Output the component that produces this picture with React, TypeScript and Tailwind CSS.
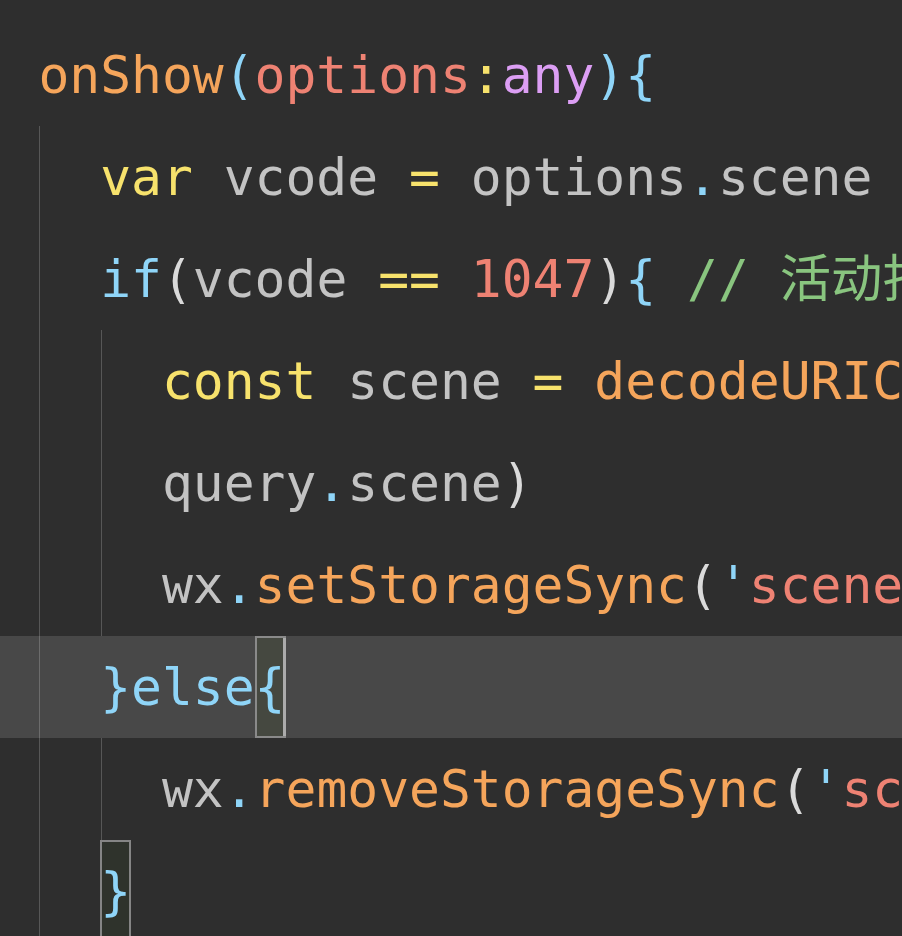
import type { ReactNode } from "react"

// 编辑器配色
const c = {
  fn: "text-[#f5a55b]",
  param: "text-[#ee8273]",
  punc: "text-[#8fd5f8]",
  kw: "text-[#f7e26c]",
  id: "text-[#c3c3c3]",
  paren: "text-[#dadada]",
  type: "text-[#dc9ef4]",
  cm: "text-[#89c57f]",
}

type LineProps = {
  guides?: number[]
  active?: boolean
  children: ReactNode
}

// 一行代码，guides 为缩进线的横坐标
function Line({ guides = [], active, children }: LineProps) {
  return (
    <div
      className={`relative h-[102px] whitespace-pre pl-[38.4px] leading-[102px] ${active ? "bg-[#484848]" : ""}`}
    >
      {guides.map((x) => (
        <span
          key={x}
          className={`absolute top-0 h-full w-px bg-white/20 ${x === 0 ? "left-[39px]" : "left-[101px]"}`}
        />
      ))}
      {children}
    </div>
  )
}

// 括号匹配框
function Match({ cursor, dark, children }: { cursor?: boolean; dark?: boolean; children: ReactNode }) {
  return (
    <span
      className={`inline-block h-[102px] align-top leading-[102px] ${
        dark ? "bg-[#2f332c]" : "bg-[#454840]"
      } ${
        cursor
          ? "shadow-[inset_2px_0_0_#8a8a8a,inset_0_2px_0_#8a8a8a,inset_0_-2px_0_#8a8a8a,inset_-3px_0_0_#ababab]"
          : "shadow-[inset_0_0_0_2px_#858585]"
      }`}
    >
      {children}
    </span>
  )
}

export default function App() {
  return (
    <div
      className="h-[936px] w-full overflow-hidden bg-[#2e2e2e] pt-[24px] text-[51.3px]"
      style={{ fontFamily: '"DejaVu Sans Mono", "Noto Sans CJK SC", monospace' }}
    >
      <Line>
        <span className={c.fn}>onShow</span>
        <span className={c.punc}>(</span>
        <span className={c.param}>options</span>
        <span className={c.kw}>:</span>
        <span className={c.type}>any</span>
        <span className={c.punc}>){"{"}</span>
      </Line>

      <Line guides={[0]}>
        {"  "}
        <span className={c.kw}>var</span>
        <span className={c.id}> vcode </span>
        <span className={c.kw}>=</span>
        <span className={c.id}> options</span>
        <span className={c.punc}>.</span>
        <span className={c.id}>scene</span>
      </Line>

      <Line guides={[0]}>
        {"  "}
        <span className={c.punc}>if</span>
        <span className={c.paren}>(</span>
        <span className={c.id}>vcode </span>
        <span className={c.kw}>==</span>{" "}
        <span className={c.param}>1047</span>
        <span className={c.paren}>)</span>
        <span className={c.punc}>{"{"}</span>{" "}
        <span className={c.cm}>// 活动扫码进入</span>
      </Line>

      <Line guides={[0, 2]}>
        {"    "}
        <span className={c.kw}>const</span>
        <span className={c.id}> scene </span>
        <span className={c.kw}>=</span>{" "}
        <span className={c.fn}>decodeURIComponent</span>
        <span className={c.paren}>(</span>
        <span className={c.id}>options</span>
      </Line>

      <Line guides={[0, 2]}>
        {"    "}
        <span className={c.id}>query</span>
        <span className={c.punc}>.</span>
        <span className={c.id}>scene</span>
        <span className={c.paren}>)</span>
      </Line>

      <Line guides={[0, 2]}>
        {"    "}
        <span className={c.id}>wx</span>
        <span className={c.punc}>.</span>
        <span className={c.fn}>setStorageSync</span>
        <span className={c.paren}>(</span>
        <span className={c.punc}>'</span>
        <span className={c.param}>scene'</span>
      </Line>

      <Line guides={[0]} active>
        {"  "}
        <span className={c.punc}>{"}"}else</span>
        <Match cursor>
          <span className={c.punc}>{"{"}</span>
        </Match>
      </Line>

      <Line guides={[0, 2]}>
        {"    "}
        <span className={c.id}>wx</span>
        <span className={c.punc}>.</span>
        <span className={c.fn}>removeStorageSync</span>
        <span className={c.paren}>(</span>
        <span className={c.punc}>'</span>
        <span className={c.param}>scene'</span>
      </Line>

      <Line guides={[0]}>
        {"  "}
        <Match dark>
          <span className={c.punc}>{"}"}</span>
        </Match>
      </Line>
    </div>
  )
}
